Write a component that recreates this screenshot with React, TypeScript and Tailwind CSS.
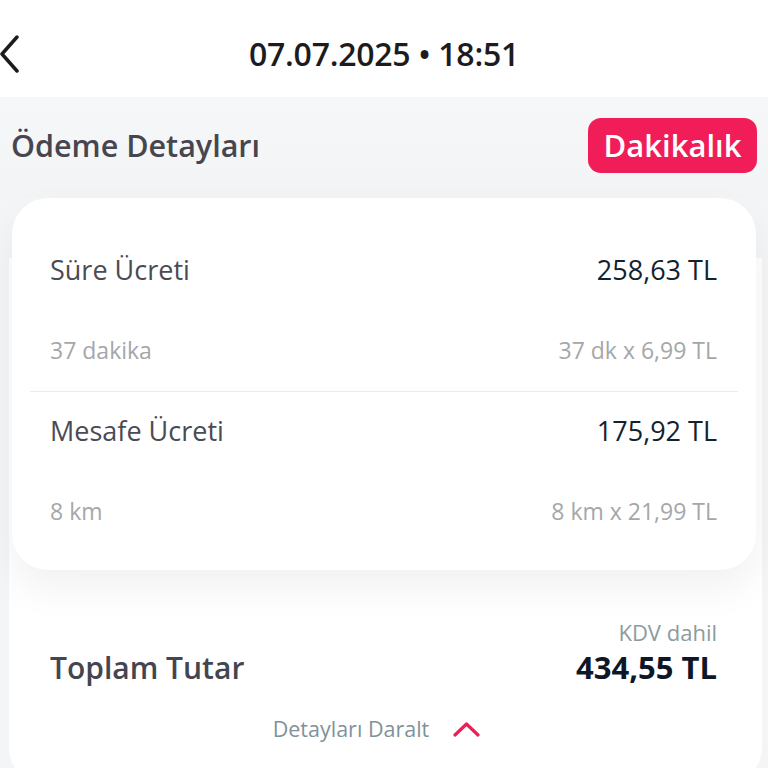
import React from "react";

const font = { fontFamily: '"Open Sans", "Noto Sans", sans-serif' };

function Row({ title, amount, sub, calc }: { title: string; amount: string; sub: string; calc: string }) {
  return (
    <div className="pl-[38px] pr-[39px]">
      <div className="h-[78px] flex items-center justify-between">
        <span className="text-[27px] text-[#4b4b53]">{title}</span>
        <span className="text-[27px] text-[#12232d]">{amount}</span>
      </div>
      <div className="h-[82px] flex items-center justify-between">
        <span className="text-[23px] text-[#a4a7a9]">{sub}</span>
        <span className="text-[23px] text-[#a4a7a9]">{calc}</span>
      </div>
    </div>
  );
}

export default function App() {
  return (
    <div className="w-[768px] h-[768px] overflow-hidden bg-[#f4f5f6]" style={font}>
      <div className="h-[97px] bg-white relative flex items-center justify-center">
        <svg className="absolute left-0 top-[35px]" width="22" height="38" viewBox="0 0 22 38" fill="none">
          <path d="M17 2 L2 19 L17 36" stroke="#1c1c1e" strokeWidth="3.5" strokeLinecap="round" strokeLinejoin="round" />
        </svg>
        <span className="text-[32px] font-semibold text-[#1c1c1e] mt-[10px] tracking-[-0.25px]">07.07.2025 • 18:51</span>
      </div>

      <div className="h-[101px] pt-[21px] pl-[11px] pr-[11px] bg-[linear-gradient(to_bottom,#f6f7f8,#f2f4f5)]">
        <div className="h-[55px] flex items-center justify-between">
          <span className="text-[30.5px] font-semibold text-[#46464f]">Ödeme Detayları</span>
          <span className="h-[55px] w-[169px] rounded-[13px] bg-[#f11d58] text-white text-[31px] font-semibold flex items-center justify-center">
            Dakikalık
          </span>
        </div>
      </div>

      <div className="ml-[9px] mr-[6px] rounded-b-[36px] bg-[linear-gradient(to_bottom,transparent_60px,white_60px)] pb-[40px]">
        <div className="ml-[3px] mr-[6px] bg-white rounded-[36px] pt-[33px] pb-[18px] shadow-[0_18px_40px_rgba(0,0,0,0.06)]">
          <Row title="Süre Ücreti" amount="258,63 TL" sub="37 dakika" calc="37 dk x 6,99 TL" />
          <div className="mx-[18px] h-px bg-[#ebebeb]" />
          <Row title="Mesafe Ücreti" amount="175,92 TL" sub="8 km" calc="8 km x 21,99 TL" />
        </div>

        <div className="pl-[41px] pr-[45px]">
          <div className="mt-[49px] h-[26px] flex items-center justify-end">
            <span className="text-[22px] text-[#8c9ba1]">KDV dahil</span>
          </div>
          <div className="mt-[4px] h-[36px] flex items-center justify-between">
            <span className="text-[30px] font-semibold text-[#45454f]">Toplam Tutar</span>
            <span className="text-[31px] font-bold text-[#0e1627]">434,55 TL</span>
          </div>
          <div className="mt-[29px] h-[30px] flex items-center justify-center gap-[24px] pr-[14px]">
            <span className="text-[21.5px] text-[#7f9299]">Detayları Daralt</span>
            <svg width="27" height="16" viewBox="0 0 27 16" fill="none">
              <path d="M2 14 L13.5 3 L25 14" stroke="#ee1f55" strokeWidth="3.2" strokeLinecap="round" strokeLinejoin="round" />
            </svg>
          </div>
        </div>
      </div>
    </div>
  );
}
